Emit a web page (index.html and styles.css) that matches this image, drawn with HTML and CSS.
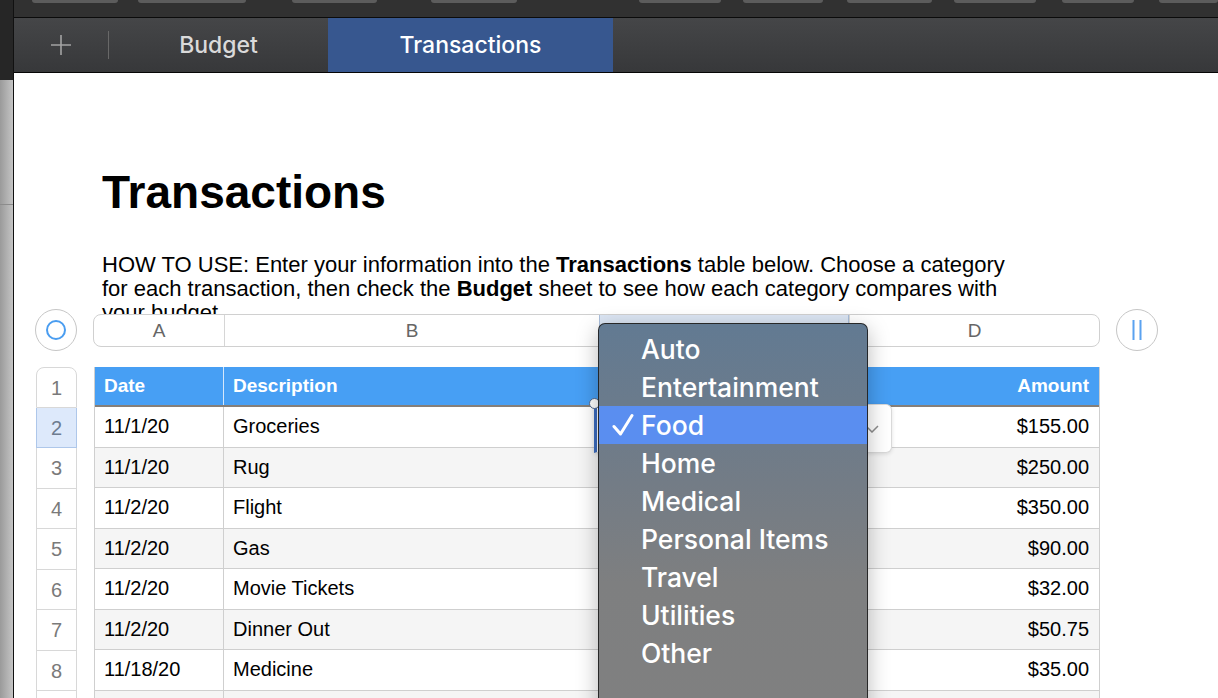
FILE: index.html
```html
<!DOCTYPE html>
<html lang="en">
<head>
  <meta charset="UTF-8">
  <title>Transactions</title>
  <link rel="stylesheet" href="styles.css">
</head>
<body>
  <div class="app">
    <div class="side-strip"></div>

    <div class="window">
      <div class="toolbar">
        <span class="tool-btn b1"></span>
        <span class="tool-btn b2"></span>
        <span class="tool-btn b3"></span>
        <span class="tool-btn b4"></span>
        <span class="tool-btn b5"></span>
        <span class="tool-btn b6"></span>
        <span class="tool-btn b7"></span>
        <span class="tool-btn b8"></span>
        <span class="tool-btn b9"></span>
        <span class="tool-btn b10"></span>
      </div>

      <div class="tabbar">
        <div class="tab-add">
          <svg width="22" height="22" viewBox="0 0 22 22"><path d="M11 1V21M1 11H21" stroke="#a3a3a3" stroke-width="1.6" fill="none"/></svg>
        </div>
        <span class="tab-sep"></span>
        <div class="tab">Budget</div>
        <div class="tab active">Transactions</div>
      </div>

      <div class="canvas">
        <h1>Transactions</h1>
        <p class="howto">HOW TO USE: Enter your information into the <b>Transactions</b> table below. Choose a category for each transaction, then check the <b>Budget</b> sheet to see how each category compares with your budget.</p>

        <div class="sheet">
          <div class="sheet-head">
            <div class="corner-btn">
              <svg width="22" height="22" viewBox="0 0 22 22"><circle cx="11" cy="11" r="9" stroke="#4a9df0" stroke-width="2" fill="none"/></svg>
            </div>
            <div class="col-letters">
              <div>A</div>
              <div>B</div>
              <div class="sel">C</div>
              <div>D</div>
            </div>
            <div class="corner-btn">
              <svg width="22" height="24" viewBox="0 0 22 24"><path d="M7.5 2V22M14.5 2V22" stroke="#5aa2f0" stroke-width="2" fill="none"/></svg>
            </div>
          </div>

          <div class="sheet-body">
            <div class="row-nums">
              <div class="rn">1</div>
              <div class="rn sel">2</div>
              <div class="rn">3</div>
              <div class="rn">4</div>
              <div class="rn">5</div>
              <div class="rn">6</div>
              <div class="rn">7</div>
              <div class="rn">8</div>
              <div class="rn"></div>
            </div>

            <div class="grid">
              <div class="tr head">
                <div class="td">Date</div>
                <div class="td">Description</div>
                <div class="td">Category</div>
                <div class="td num">Amount</div>
              </div>
              <div class="tr">
                <div class="td">11/1/20</div>
                <div class="td">Groceries</div>
                <div class="td">Food</div>
                <div class="td num">$155.00</div>
              </div>
              <div class="tr">
                <div class="td">11/1/20</div>
                <div class="td">Rug</div>
                <div class="td">Home</div>
                <div class="td num">$250.00</div>
              </div>
              <div class="tr">
                <div class="td">11/2/20</div>
                <div class="td">Flight</div>
                <div class="td">Travel</div>
                <div class="td num">$350.00</div>
              </div>
              <div class="tr">
                <div class="td">11/2/20</div>
                <div class="td">Gas</div>
                <div class="td">Auto</div>
                <div class="td num">$90.00</div>
              </div>
              <div class="tr">
                <div class="td">11/2/20</div>
                <div class="td">Movie Tickets</div>
                <div class="td">Entertainment</div>
                <div class="td num">$32.00</div>
              </div>
              <div class="tr">
                <div class="td">11/2/20</div>
                <div class="td">Dinner Out</div>
                <div class="td">Food</div>
                <div class="td num">$50.75</div>
              </div>
              <div class="tr">
                <div class="td">11/18/20</div>
                <div class="td">Medicine</div>
                <div class="td">Medical</div>
                <div class="td num">$35.00</div>
              </div>
              <div class="tr">
                <div class="td"></div>
                <div class="td"></div>
                <div class="td"></div>
                <div class="td num"></div>
              </div>
            </div>
          </div>

          <!-- cell editor for C2 with its popup button -->
          <div class="cell-editor">
            <svg class="chevron" width="14" height="8" viewBox="0 0 14 8"><path d="M1 1L7 7L13 1" stroke="#8d8d8d" stroke-width="1.5" fill="none"/></svg>
          </div>
          <span class="handle"></span>

          <div class="menu">
            <div class="menu-item">Auto</div>
            <div class="menu-item">Entertainment</div>
            <div class="menu-item checked">
              <svg class="check" width="22" height="24" viewBox="0 0 22 24"><path d="M2 13.5L8.5 21L20 2.5" stroke="#fff" stroke-width="3" stroke-linecap="round" stroke-linejoin="round" fill="none"/></svg>
              Food
            </div>
            <div class="menu-item">Home</div>
            <div class="menu-item">Medical</div>
            <div class="menu-item">Personal Items</div>
            <div class="menu-item">Travel</div>
            <div class="menu-item">Utilities</div>
            <div class="menu-item">Other</div>
          </div>
        </div>
      </div>
    </div>
  </div>
</body>
</html>
```

FILE: styles.css
```css
* {
  box-sizing: border-box;
}
html, body {
  height: 100%;
}
body {
  margin: 0;
  overflow: hidden;
  font-family: "Liberation Sans", Arial, sans-serif;
  background: #fff;
  color: #000;
}
.app {
  display: flex;
  height: 698px;
  overflow: hidden;
}

/* left edge of the desktop behind the window */
.side-strip {
  width: 14px;
  flex: none;
  border-right: 1px solid #111;
  background:
    linear-gradient(#262626 0 80px, transparent 80px),
    linear-gradient(transparent 204px, #8c8c8c 204px 205px, transparent 205px),
    linear-gradient(to right, #9a9a9a, #c4c4c4);
}

.window {
  flex: 1;
  min-width: 0;
  display: flex;
  flex-direction: column;
  overflow: hidden;
}

.toolbar {
  height: 18px;
  flex: none;
  display: flex;
  background: #313131;
  border-bottom: 1px solid #0b0b0b;
}
.tool-btn {
  height: 3px;
  background: #5c5c5c;
  border-radius: 0 0 5px 5px;
}
.b1 { margin-left: 18px; width: 88px; }
.b2 { margin-left: 20px; width: 110px; }
.b3 { margin-left: 46px; width: 87px; }
.b4 { margin-left: 54px; width: 88px; }
.b5 { margin-left: 122px; width: 83px; }
.b6 { margin-left: 22px; width: 82px; }
.b7 { margin-left: 24px; width: 87px; }
.b8 { margin-left: 22px; width: 83px; }
.b9 { margin-left: 26px; width: 74px; }
.b10 { margin-left: 25px; width: 60px; }

.tabbar {
  height: 55px;
  flex: none;
  display: flex;
  align-items: center;
  background: linear-gradient(#454648, #37383a);
  border-bottom: 1px solid #050505;
  font-family: Inter, "Noto Sans", sans-serif;
  font-size: 23px;
  font-weight: 500;
}
.tab-add {
  width: 94px;
  display: flex;
  justify-content: center;
}
.tab-sep {
  width: 1px;
  height: 28px;
  background: #686868;
}
.tab {
  width: 219px;
  height: 100%;
  display: flex;
  align-items: center;
  justify-content: center;
  color: #dadada;
}
.tab.active {
  width: 285px;
  background: #37578f;
  color: #fff;
}

.canvas {
  flex: 1;
  padding-left: 88px;
}
h1 {
  margin: 96px 0 0;
  font-size: 46px;
  line-height: 46px;
  font-weight: bold;
}
.howto {
  width: 920px;
  margin: 38px 0 -16px;
  font-size: 22px;
  line-height: 24px;
}

.sheet {
  position: relative;
  margin-left: -67px;
  width: 1123px;
}
.sheet-head {
  display: flex;
  align-items: center;
  gap: 16px;
  height: 42px;
}
.corner-btn {
  width: 42px;
  height: 42px;
  flex: none;
  border-radius: 50%;
  border: 1px solid #c6c6c6;
  background: #fff;
  display: flex;
  align-items: center;
  justify-content: center;
}
.col-letters {
  width: 1007px;
  height: 33px;
  display: grid;
  grid-template-columns: 130px 375px 250px 1fr;
  border: 1px solid #d0d0d0;
  border-radius: 8px;
  background: #fff;
  overflow: hidden;
}
.col-letters div {
  text-align: center;
  line-height: 31px;
  font-size: 19px;
  color: #666;
  border-left: 1px solid #d6d6d6;
}
.col-letters div:first-child {
  border-left: none;
}
.col-letters .sel {
  background: #dbe5f3;
  border-left-color: #a9bedb;
  border-right: 1px solid #a9bedb;
}

.sheet-body {
  display: flex;
  gap: 17px;
  margin: 16px 0 0 1px;
}
.row-nums {
  width: 41px;
  flex: none;
}
.rn {
  height: 40.5px;
  border: 1px solid #d8d8d8;
  border-top: none;
  text-align: center;
  line-height: 40px;
  font-size: 20px;
  color: #7a7a7a;
}
.rn:first-child {
  border-top: 1px solid #d8d8d8;
  border-radius: 8px 8px 0 0;
}
.rn.sel {
  background: #dde9fb;
  border-color: #aec7ea;
  color: #6d7c90;
}

.grid {
  width: 1006px;
  border-left: 1px solid #cfcfcf;
  border-right: 1px solid #cfcfcf;
}
.tr {
  display: grid;
  grid-template-columns: 128px 375px 250px 1fr;
  height: 40.5px;
  border-bottom: 1px solid #cfcfcf;
}
.tr:nth-child(odd) {
  background: #f5f5f5;
}
.td {
  display: flex;
  align-items: center;
  padding: 0 9px;
  font-size: 20px;
  border-left: 1px solid #cfcfcf;
  white-space: nowrap;
  overflow: hidden;
}
.td:first-child {
  border-left: none;
}
.td.num {
  justify-content: flex-end;
  padding-right: 10px;
}
.tr.head {
  height: 40px;
  background: #479ff4;
  border-bottom: 2px solid #857f79;
}
.tr.head .td {
  color: #fff;
  font-weight: bold;
  font-size: 19px;
  border-left-color: #d5e7fb;
}

/* editing overlay on C2 */
.cell-editor {
  position: absolute;
  left: 559px;
  top: 95px;
  width: 298px;
  height: 49px;
  background: #fff;
  border: 1px solid #d9d9d9;
  border-left: 3px solid #3c6cbf;
  border-radius: 0 6px 6px 0;
  box-shadow: 0 1px 4px rgba(0,0,0,.12);
}
.chevron {
  position: absolute;
  right: 12px;
  top: 20px;
}
.handle {
  position: absolute;
  left: 554px;
  top: 89px;
  width: 11px;
  height: 11px;
  border-radius: 50%;
  background: #fff;
  border: 1.5px solid #51698f;
}

.menu {
  position: absolute;
  left: 563px;
  top: 14px;
  width: 270px;
  height: 420px;
  padding-top: 6px;
  border: 1px solid rgba(25,25,25,.85);
  border-radius: 7px;
  background: linear-gradient(#627a92 0, #737c86 38%, #7e7f80 62%, #808080);
  box-shadow: 0 6px 22px rgba(0,0,0,.28);
  font-family: Inter, "Noto Sans", sans-serif;
}
.menu-item {
  position: relative;
  height: 38px;
  line-height: 38px;
  padding-left: 42px;
  font-size: 26.5px;
  font-weight: 500;
  color: #fff;
}
.menu-item.checked {
  background: #5a8ef0;
}
.check {
  position: absolute;
  left: 13px;
  top: 7px;
}
```
